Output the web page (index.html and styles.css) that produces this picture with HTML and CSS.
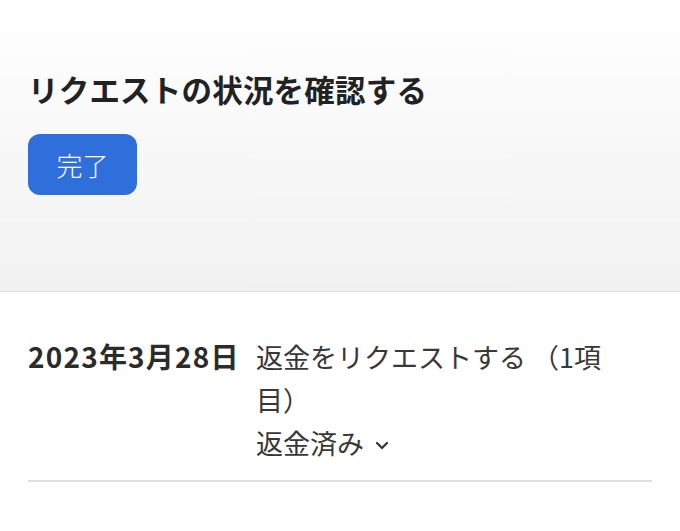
FILE: index.html
```html
<!DOCTYPE html>
<html lang="ja">
<head>
<meta charset="utf-8">
<link rel="stylesheet" href="styles.css">
</head>
<body>
<header class="top">
  <h1 class="title">リクエストの状況を確認する</h1>
  <button class="done">完了</button>
</header>
<section class="list">
  <div class="row">
    <div class="date">2023年3月28日</div>
    <div class="info">
      <div class="desc">返金をリクエストする （1項目）</div>
      <div class="status">返金済み<svg class="chev" width="14" height="9" viewBox="0 0 14 9"><path d="M2 2 L7 7 L12 2" fill="none" stroke="#333" stroke-width="2.2" stroke-linecap="round" stroke-linejoin="round"/></svg></div>
    </div>
  </div>
</section>
</body>
</html>
```
FILE: styles.css
```css
html, body {
  margin: 0;
  padding: 0;
  background: #fff;
  font-family: "Noto Sans CJK JP", "Noto Sans", sans-serif;
  color: #2b2b2b;
}
.top {
  height: 292px;
  box-sizing: border-box;
  border-bottom: 1px solid #dcdcdc;
  background: linear-gradient(to bottom, #ffffff 0%, #f1f1f1 100%);
  padding: 68px 28px 0;
}
.title {
  margin: 0;
  font-size: 30.5px;
  letter-spacing: 0.2px;
  line-height: 42px;
  font-weight: 700;
  color: #222;
}
.done {
  display: block;
  margin-top: 24px;
  width: 109px;
  height: 61px;
  border: none;
  border-radius: 12px;
  background: #2f6fdc;
  color: #fff;
  font-family: inherit;
  font-size: 26px;
  font-weight: 300;
  padding: 0;
}
.list {
  padding: 0 28px;
}
.row {
  display: flex;
  padding: 43px 0 16px;
  border-bottom: 2px solid #e0e0e0;
}
.date {
  width: 228px;
  flex: none;
  font-size: 28px;
  letter-spacing: 1.2px;
  line-height: 43px;
  font-weight: 700;
  color: #2b2b2b;
}
.info {
  width: 360px;
  font-size: 27px;
  line-height: 43px;
  color: #383838;
}
.status {
  display: flex;
  align-items: center;
}
.chev {
  margin-left: 11px;
  margin-top: 6px;
}
```
